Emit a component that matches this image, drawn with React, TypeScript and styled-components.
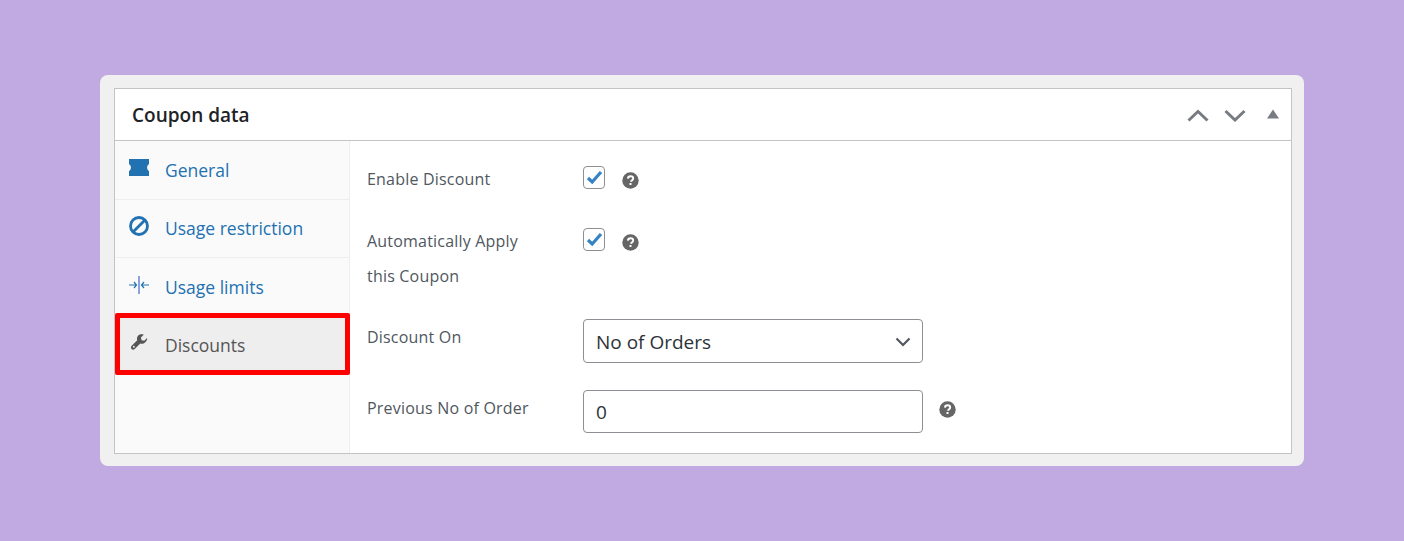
import styled, { createGlobalStyle } from 'styled-components';

const GlobalStyle = createGlobalStyle`
  html, body {
    margin: 0;
    padding: 0;
    background: #c1a9e2;
  }
  body {
    font-family: "Open Sans", "Noto Sans", "Liberation Sans", sans-serif;
  }
`

const Page = styled.div`
  width: 1404px;
  height: 541px;
  padding: 75px 100px;
  box-sizing: border-box;
`

const Card = styled.div`
  background: #f0f0f0;
  border-radius: 8px;
  height: 391px;
  padding: 13px 12px 12px 14px;
  box-sizing: border-box;
`

const Panel = styled.section`
  background: #fff;
  border: 1px solid #c3c4c7;
  height: 100%;
  box-sizing: border-box;
  display: flex;
  flex-direction: column;
`

const Header = styled.header`
  height: 51px;
  flex: none;
  border-bottom: 1px solid #c3c4c7;
  display: flex;
  align-items: center;
  justify-content: space-between;
  padding: 0 12px 0 17px;
`

const Title = styled.h2`
  margin: 0;
  font-size: 19px;
  font-weight: 600;
  color: #1d2327;
`

const HandleGroup = styled.div`
  display: flex;
  align-items: center;
  color: #787c82;
`

const Handle = styled.svg<{ $gap?: number }>`
  margin-left: ${p => p.$gap ?? 0}px;
  flex: none;
`

const Body = styled.div`
  flex: 1;
  display: flex;
  min-height: 0;
`

const Sidebar = styled.nav`
  width: 235px;
  flex: none;
  box-sizing: border-box;
  background: #fafafa;
  border-right: 1px solid #eee;
`

const TabIcon = styled.span`
  width: 20px;
  height: 20px;
  flex: none;
  display: flex;
  align-items: center;
  justify-content: center;
  margin-top: -4px;
`

const Tab = styled.div`
  height: 58.5px;
  box-sizing: border-box;
  display: flex;
  align-items: center;
  gap: 16px;
  padding-left: 14px;
  font-size: 17.5px;
  color: #2271b1;
  border-bottom: 1px solid #eee;
`

// outlined in red in the screenshot, sits a little over the row above
const ActiveTab = styled(Tab)`
  position: relative;
  width: 235px;
  height: 62px;
  margin-top: -3.5px;
  padding: 2px 0 0 9px;
  color: #555;
  background: #eee;
  border: 5px solid #f00;
  border-radius: 2px;

  ${TabIcon} {
    margin-top: -6px;
  }
`

const Form = styled.div`
  flex: 1;
  padding-left: 17px;
`

const Row = styled.div<{ $height: number; $inset?: number }>`
  height: ${p => p.$height}px;
  padding-top: ${p => p.$inset ?? 0}px;
  box-sizing: border-box;
  display: flex;
  align-items: flex-start;
`

const Label = styled.label<{ $narrow?: boolean }>`
  width: ${p => (p.$narrow ? '170px' : '216px')};
  margin-right: ${p => (p.$narrow ? '46px' : '0')};
  flex: none;
  font-size: 16px;
  letter-spacing: 0.2px;
  line-height: 35px;
  color: #50575e;
`

const Control = styled.div<{ $top?: number }>`
  margin-top: ${p => p.$top ?? 0}px;
  display: flex;
  align-items: center;
`

const Check = styled.span`
  width: 20px;
  height: 21px;
  border: 1px solid #8c8f94;
  border-radius: 4px;
  background: #fff;
  display: flex;
  align-items: center;
  justify-content: center;
`

const Field = styled.div`
  width: 340px;
  box-sizing: border-box;
  border: 1px solid #8c8f94;
  border-radius: 4px;
  background: #fff;
  color: #2c3338;
  font-size: 19px;
  padding: 0 12px;
  display: flex;
  align-items: center;
  justify-content: space-between;
`

const SelectField = styled(Field)`
  height: 44px;
  padding: 1px 11px 0 12px;
`

const InputField = styled(Field)`
  height: 43px;
`

const HelpIcon = styled.svg<{ $shift: number; $gap: number }>`
  width: 17px;
  height: 17px;
  margin-left: ${p => p.$gap}px;
  margin-top: ${p => p.$shift}px;
  flex: none;
`

function Help({ shift, gap }: { shift: number; gap: number }) {
  return (
    <HelpIcon $shift={shift} $gap={gap} viewBox="0 0 17 17">
      <circle cx="8.5" cy="8.5" r="8.2" fill="#666" />
      <path d="M5.900 6.600c.1-1.600 1.200-2.400 2.700-2.400 1.500 0 2.600.9 2.600 2.200 0 1-.6 1.500-1.300 2-.6.4-.8.7-.8 1.300" fill="none" stroke="#fff" strokeWidth="1.900" />
      <rect x="7.500" y="11" width="2" height="2" fill="#fff" />
    </HelpIcon>
  )
}

function Tick() {
  return (
    <svg width="17" height="15" viewBox="0 0 17 15">
      <path d="M2 8l4.200 4L15 2" fill="none" stroke="#3582c4" strokeWidth="3.200" />
    </svg>
  )
}

function TicketIcon() {
  return (
    <svg width="20" height="17" viewBox="0 0 20 17">
      <path d="M0 0h20v5a4.100 4.100 0 0 0 0 7v5H0v-5a4.100 4.100 0 0 0 0-7z" fill="#2271b1" />
    </svg>
  )
}

function BlockedIcon() {
  return (
    <svg width="20" height="20" viewBox="0 0 20 20">
      <circle cx="10" cy="10" r="8.500" fill="none" stroke="#2271b1" strokeWidth="2.800" />
      <path d="M4.500 15.500l11-11" stroke="#2271b1" strokeWidth="2.800" />
    </svg>
  )
}

function LimitsIcon() {
  return (
    <svg width="20" height="18" viewBox="0 0 20 18">
      <path d="M10 0v18" stroke="#6f8fd6" strokeWidth="1.600" />
      <path d="M0 9h7.500M5 6l2.500 3L5 12M20 9h-7.500M15 6l-2.500 3 2.500 3" fill="none" stroke="#2271b1" strokeWidth="1.200" />
    </svg>
  )
}

function WrenchIcon() {
  return (
    <svg width="17" height="17" viewBox="0 0 18 18">
      <path d="M17 4.200l-3 3-2.800-.7-.7-2.800 3-3C11.300-.1 9 .3 7.700 1.700 6.300 3 6 5 6.600 6.700L1 12.300c-1.300 1.300-1.300 2.600-.4 3.600s2.400.9 3.600-.3l5.600-5.600c1.700.6 3.700.3 5-1C16.200 7.600 17.500 6 17 4.200z" fill="#555" />
      <circle cx="3" cy="13.500" r="1" fill="#eee" />
    </svg>
  )
}

export default function App() {
  return (
    <Page>
      <GlobalStyle />
      <Card>
        <Panel>
          <Header>
            <Title>Coupon data</Title>
            <HandleGroup>
              <Handle width="22" height="14" viewBox="0 0 22 14">
                <path d="M1.500 12.500L11 3.500l9.500 9" fill="none" stroke="currentColor" strokeWidth="3" />
              </Handle>
              <Handle $gap={15} width="22" height="14" viewBox="0 0 22 14">
                <path d="M1.500 3l9.500 9 9.500-9" fill="none" stroke="currentColor" strokeWidth="3" />
              </Handle>
              <Handle $gap={21} width="12" height="14" viewBox="0 0 12 14">
                <path d="M6 1.500L12 10.500H0z" fill="currentColor" />
              </Handle>
            </HandleGroup>
          </Header>
          <Body>
            <Sidebar>
              <Tab><TabIcon><TicketIcon /></TabIcon>General</Tab>
              <Tab><TabIcon><BlockedIcon /></TabIcon>Usage restriction</Tab>
              <Tab><TabIcon><LimitsIcon /></TabIcon>Usage limits</Tab>
              <ActiveTab><TabIcon><WrenchIcon /></TabIcon>Discounts</ActiveTab>
            </Sidebar>
            <Form>
              <Row $height={62} $inset={21}>
                <Label>Enable Discount</Label>
                <Control $top={4}>
                  <Check><Tick /></Check>
                  <Help shift={5} gap={17} />
                </Control>
              </Row>
              <Row $height={116} $inset={21}>
                <Label $narrow>Automatically Apply this Coupon</Label>
                <Control $top={4}>
                  <Check><Tick /></Check>
                  <Help shift={5} gap={17} />
                </Control>
              </Row>
              <Row $height={71} $inset={1}>
                <Label>Discount On</Label>
                <Control $top={-1}>
                  <SelectField>
                    No of Orders
                    <svg width="16" height="10" viewBox="0 0 16 10">
                      <path d="M1.500 1.500L8 8l6.500-6.500" fill="none" stroke="#50575e" strokeWidth="2.200" />
                    </svg>
                  </SelectField>
                </Control>
              </Row>
              <Row $height={63} $inset={1}>
                <Label>Previous No of Order</Label>
                <Control $top={-1}>
                  <InputField>0</InputField>
                  <Help shift={-5} gap={16} />
                </Control>
              </Row>
            </Form>
          </Body>
        </Panel>
      </Card>
    </Page>
  )
}
